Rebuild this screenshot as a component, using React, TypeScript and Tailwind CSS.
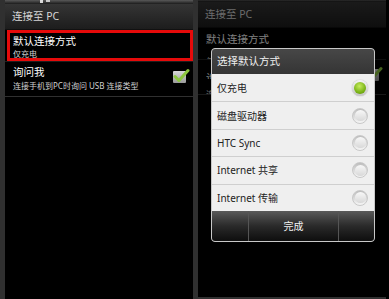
import React from "react";

const font = "font-['Noto_Sans','Noto_Sans_CJK_SC',sans-serif]";

function CheckBox() {
  return (
    <svg width="18" height="16" viewBox="0 0 18 16">
      <defs>
        <linearGradient id="cbg" x1="0" y1="0" x2="0" y2="1">
          <stop offset="0" stopColor="#d8d8d8" />
          <stop offset="1" stopColor="#9a9a9a" />
        </linearGradient>
      </defs>
      <rect x="1" y="3" width="13" height="12" rx="1" fill="url(#cbg)" />
      <path d="M3 8.5 L7 12.5 L16 2.5" stroke="#8cc63e" strokeWidth="3" fill="none" strokeLinecap="round" strokeLinejoin="round" />
    </svg>
  );
}

function Clip({ right, children }: { right?: boolean; children: React.ReactNode }) {
  if (!right) return <>{children}</>;
  return <div className="w-[5px] overflow-hidden whitespace-nowrap">{children}</div>;
}

function Panel({ top, right }: { top: number; right?: boolean }) {
  return (
    <div
      className={`relative w-[193px] h-[299px] bg-black border-l-[5px] border-[#303030] flex flex-col shrink-0 ${
        right ? "border-b-2" : ""
      }`}
    >
      <div
        className="relative w-full shrink-0 bg-gradient-to-b from-[#5a5a5a] to-[#1c1c1c]"
        style={{ height: top }}
      >
        {!right && (
          <>
            <div className="absolute left-[35px] top-0 w-[3px] h-[3px] bg-white/80" />
            <div className="absolute left-[41px] top-0 w-[4px] h-[2px] bg-white/70" />
          </>
        )}
      </div>
      <div className="h-[26px] shrink-0 flex items-center pl-[7px] bg-gradient-to-b from-[#353535] to-[#1d1d1d] border-b border-[#111]">
        <span className={`${font} text-[10.5px] text-[#d6d6d6] leading-none`}>连接至 PC</span>
      </div>
      <div className="relative h-[32px] shrink-0 flex flex-col pl-[8px] pt-[5px] border-b border-[#1e1e1e]">
        <span className={`${font} text-[10.5px] text-white leading-[13px]`}>默认连接方式</span>
        <Clip right={right}>
          <span className={`${font} text-[8px] text-[#d0d0d0] leading-[12px]`}>仅充电</span>
        </Clip>
        {!right && (
          <div className="absolute left-[2px] top-0 right-0 bottom-0 border-[3px] border-[#e60a0a]" />
        )}
      </div>
      <div className="relative h-[35px] shrink-0 flex flex-col pl-[8px] pt-[4px] border-b border-[#303030]">
        <Clip right={right}>
          <span className={`${font} text-[10.5px] text-white leading-[13px]`}>询问我</span>
        </Clip>
        <Clip right={right}>
          <span className={`${font} text-[8px] text-[#d0d0d0] leading-[14px]`}>
            连接手机到PC时询问 USB 连接类型
          </span>
        </Clip>
        <div className="absolute left-[167px] top-[6px]">
          <CheckBox />
        </div>
      </div>
      <div className="flex-1" />
      {right && <div className="absolute inset-0 bg-black/50" />}
      {right && <Dialog />}
    </div>
  );
}

function Radio({ on }: { on?: boolean }) {
  if (on)
    return (
      <div className="w-[16px] h-[16px] rounded-full bg-gradient-to-b from-[#f4f4f4] to-[#c4c4c4] flex items-center justify-center shadow-[0_0_1px_#888]">
        <div className="w-[12px] h-[12px] rounded-full bg-[radial-gradient(circle_at_45%_35%,#c6ec5e,#7ab317_60%,#5b8c0a)]" />
      </div>
    );
  return (
    <div className="w-[16px] h-[16px] rounded-full bg-gradient-to-b from-[#bdbdbd] to-[#f6f6f6] flex items-center justify-center border border-[#c8c8c8]">
      <div className="w-[11px] h-[11px] rounded-full bg-gradient-to-b from-[#f8f8f8] to-[#d8d8d8]" />
    </div>
  );
}

function Dialog() {
  const items = ["仅充电", "磁盘驱动器", "HTC Sync", "Internet 共享", "Internet 传输"];
  return (
    <div className="absolute left-[13px] top-[48px] w-[164px] h-[194px] rounded-[4px] border border-[#c8c8c8] overflow-hidden flex flex-col bg-[#efefef]">
      <div className="h-[25px] shrink-0 flex items-center pl-[5px] bg-gradient-to-b from-[#474747] to-[#353535]">
        <span className={`${font} text-[10.5px] text-[#f0f0f0] leading-none`}>选择默认方式</span>
      </div>
      {items.map((t, i) => (
        <div
          key={t}
          className={`h-[27.4px] shrink-0 flex items-center justify-between pl-[5px] pr-[6px] ${
            i > 0 ? "border-t border-[#cfcfcf]" : ""
          }`}
        >
          <span className={`${font} text-[10px] text-[#222] leading-none`}>{t}</span>
          <Radio on={i === 0} />
        </div>
      ))}
      <div className="flex-1 flex bg-gradient-to-b from-[#5a5a5a] via-[#2a2a2a] to-[#0e0e0e]">
        <div className="w-[37px] border-r border-[#555]" />
        <div className="w-[90px] border-r border-[#555] flex items-center justify-center">
          <span className={`${font} text-[10px] text-[#f2f2f2] leading-none`}>完成</span>
        </div>
        <div className="flex-1" />
      </div>
    </div>
  );
}

export default function App() {
  return (
    <div className="w-[389px] h-[299px] bg-black flex overflow-hidden">
      <Panel top={4} />
      <Panel top={2} right />
      <div className="flex-1 bg-black" />
    </div>
  );
}
